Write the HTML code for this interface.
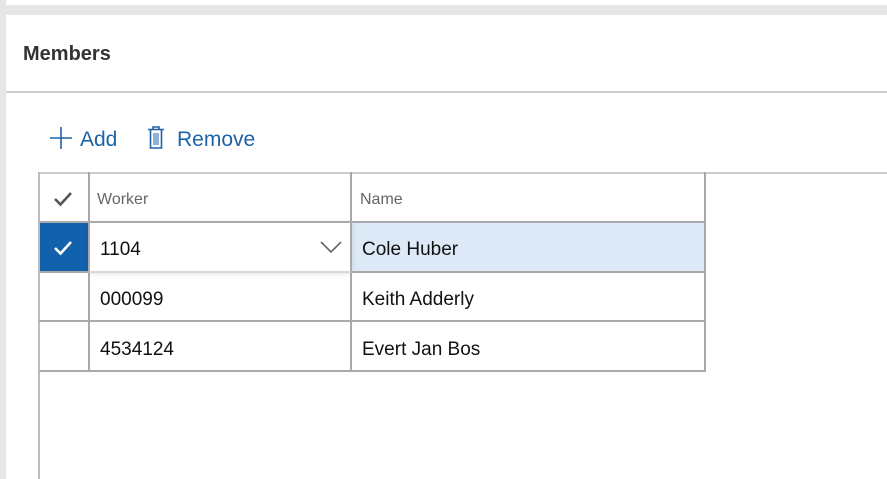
<!DOCTYPE html>
<html><head><style>
*{margin:0;padding:0;box-sizing:border-box}
body{width:887px;height:479px;overflow:hidden;background:#e6e6e6;font-family:"Liberation Sans",sans-serif;position:relative}
.a{position:absolute}
.t{position:absolute;white-space:nowrap;line-height:1}
.hl{position:absolute;background:#a9a9a9;height:2px}
.vl{position:absolute;background:#a9a9a9;width:2px}
</style></head><body>
<div class="a" style="left:6px;top:0;width:881px;height:5px;background:#fff"></div>
<div class="a" style="left:6px;top:15px;width:881px;height:464px;background:#fff"></div>
<div class="t" style="left:23px;top:44px;font-size:20px;font-weight:bold;color:#333">Members</div>
<div class="a" style="left:6px;top:91px;width:881px;height:2px;background:#cfcfcf"></div>
<svg class="a" style="left:49px;top:127px" width="24" height="22"><path d="M12 0V22M1 11H23" stroke="#1e63a8" stroke-width="1.6"/></svg>
<div class="t" style="left:80px;top:129px;font-size:21px;color:#1e63a8">Add</div>
<svg class="a" style="left:147px;top:126px" width="18" height="24"><path d="M1 3.5H17M6 3.5V1H12V3.5M3.5 4V22H14.5V4" stroke="#1e63a8" stroke-width="1.6" fill="none"/><path d="M7 7V19M9 7V19M11 7V19" stroke="#1e63a8" stroke-width="1" fill="none"/></svg>
<div class="t" style="left:177px;top:129px;font-size:21px;color:#1e63a8">Remove</div>
<div class="a" style="left:39px;top:172px;width:848px;height:2px;background:#cccccc"></div>
<div class="a" style="left:351px;top:222px;width:354px;height:49px;background:#dde9f6"></div>
<div class="a" style="left:39px;top:222px;width:50px;height:49px;background:#1261ad"></div>
<div class="a" style="left:90px;top:222px;width:261px;height:49px;background:#fff;box-shadow:0 2px 6px rgba(0,0,0,.15)"></div>
<div class="vl" style="left:38px;top:172px;height:307px;background:#bdbdbd"></div>
<div class="vl" style="left:88px;top:172px;height:199px"></div>
<div class="vl" style="left:350px;top:172px;height:199px"></div>
<div class="vl" style="left:704px;top:172px;height:199px"></div>
<div class="hl" style="left:39px;top:221px;width:667px"></div>
<div class="hl" style="left:351px;top:271px;width:355px"></div>
<div class="hl" style="left:39px;top:271px;width:50px"></div>
<div class="hl" style="left:89px;top:271px;width:262px;background:#d6d6d6"></div>
<div class="hl" style="left:39px;top:320px;width:667px"></div>
<div class="hl" style="left:39px;top:370px;width:667px"></div>
<svg class="a" style="left:53px;top:191px" width="20" height="16"><path d="M2 8L7.5 13.5L18 2" stroke="#555" stroke-width="2.6" fill="none"/></svg>
<svg class="a" style="left:53px;top:240px" width="20" height="16"><path d="M2 8L7.5 13.5L18 2" stroke="#fff" stroke-width="2.6" fill="none"/></svg>
<div class="t" style="left:97px;top:192px;font-size:16px;color:#666">Worker</div>
<div class="t" style="left:360px;top:192px;font-size:16px;color:#666">Name</div>
<div class="t" style="left:100px;top:240px;font-size:19px;color:#111">1104</div>
<svg class="a" style="left:320px;top:240px" width="22" height="14"><path d="M1 2L11 12L21 2" stroke="#666" stroke-width="1.6" fill="none"/></svg>
<div class="t" style="left:362px;top:240px;font-size:19px;color:#111">Cole Huber</div>
<div class="t" style="left:100px;top:290px;font-size:19px;color:#111">000099</div>
<div class="t" style="left:362px;top:290px;font-size:19px;color:#111">Keith Adderly</div>
<div class="t" style="left:100px;top:340px;font-size:19px;color:#111">4534124</div>
<div class="t" style="left:362px;top:340px;font-size:19px;color:#111">Evert Jan Bos</div>
</body></html>
